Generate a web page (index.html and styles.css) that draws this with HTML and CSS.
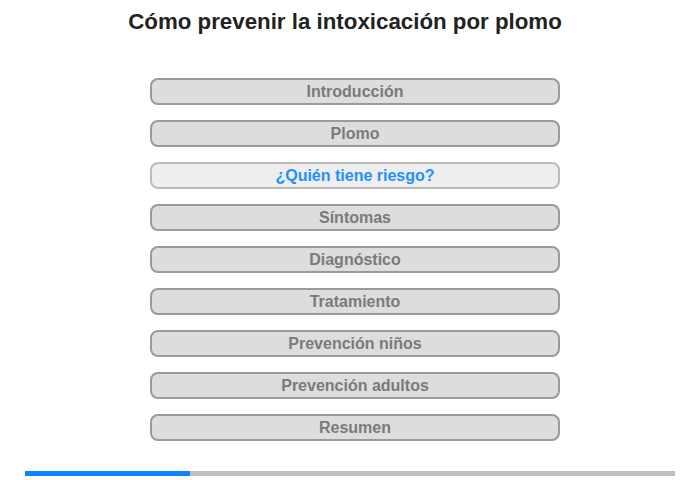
FILE: index.html
```html
<!DOCTYPE html>
<html>
<head>
  <meta charset="UTF-8">
  <meta name="viewport" content="width=device-width, initial-scale=1">
  <link rel="stylesheet" href="styles.css">
</head>
<body>
  <h1 class="title">Cómo prevenir la intoxicación por plomo</h1>
  <div class="menu">
    <button class="item">Introducción</button>
    <button class="item">Plomo</button>
    <button class="item active">¿Quién tiene riesgo?</button>
    <button class="item">Síntomas</button>
    <button class="item">Diagnóstico</button>
    <button class="item">Tratamiento</button>
    <button class="item">Prevención niños</button>
    <button class="item">Prevención adultos</button>
    <button class="item">Resumen</button>
  </div>
  <div class="progress">
    <div class="progress-fill" style="width: 25.4%"></div>
  </div>
</body>
</html>
```

FILE: styles.css
```css
body {
  margin: 0;
  font-family: "Liberation Sans", Arial, sans-serif;
  background: #fff;
}

.title {
  margin: 10px 0 0 0;
  font-size: 22.3px;
  line-height: 24px;
  text-align: center;
  color: #222;
  padding-right: 10px;
}

.menu {
  display: flex;
  flex-direction: column;
  gap: 15px;
  width: 410px;
  margin: 44px 0 0 150px;
}

.item {
  height: 27px;
  border: 2px solid #9a9a9a;
  border-radius: 8px;
  background: #dddddd;
  color: #7a7a7a;
  font-family: "Liberation Sans", Arial, sans-serif;
  font-weight: bold;
  font-size: 16px;
  padding: 0;
  cursor: pointer;
}

.item.active {
  background: #eeeeee;
  border-color: #bbbbbb;
  color: #1e90ff;
}

.progress {
  height: 5px;
  margin: 30px 25px 0 25px;
  background: #c0c0c0;
}

.progress-fill {
  height: 100%;
  background: #0a84ff;
}
```
